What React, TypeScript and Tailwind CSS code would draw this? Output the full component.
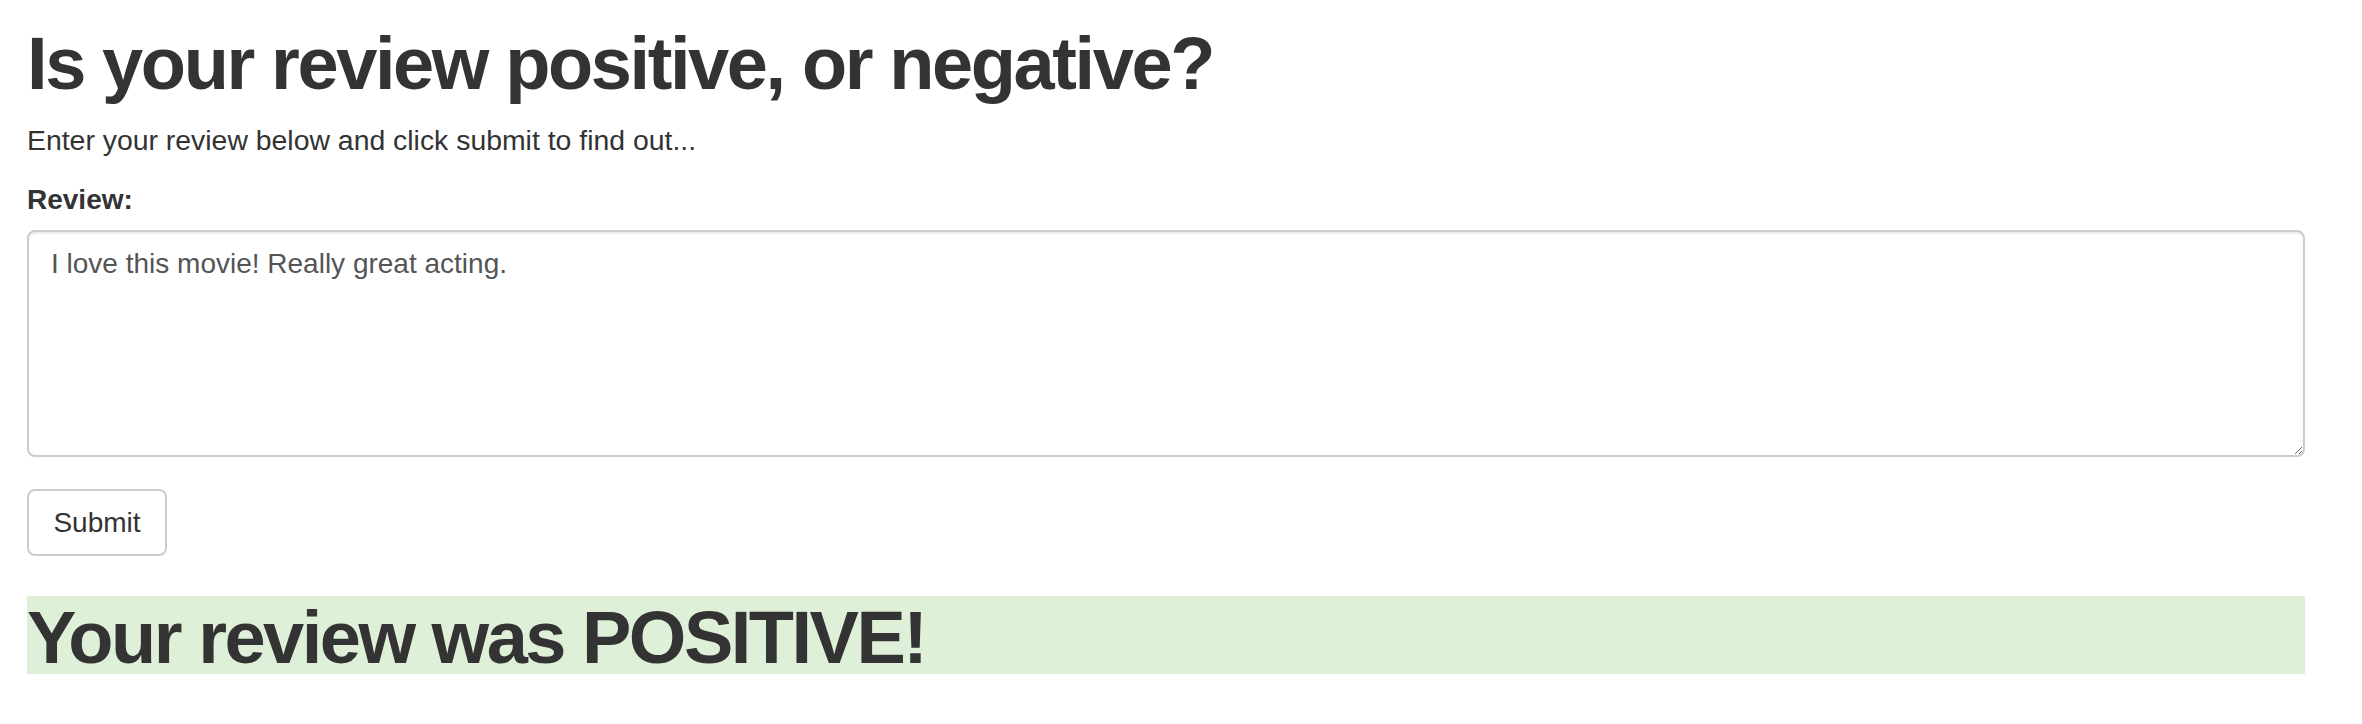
import { useState } from 'react'

export default function App() {
  const [review, setReview] = useState('I love this movie! Really great acting.')

  return (
    <div className="min-h-screen bg-white pl-[27px] pr-[57px] font-['Liberation_Sans',Arial,sans-serif] text-[#333]">
      <h1 className="mt-[24px] text-[74px] leading-[79px] font-bold tracking-[-2.4px] whitespace-nowrap">
        Is your review positive, or negative?
      </h1>
      <p className="mt-[17px] text-[28.4px] leading-[40px]">
        Enter your review below and click submit to find out...
      </p>
      <form onSubmit={(e) => e.preventDefault()}>
        <label htmlFor="review" className="mt-[20px] block text-[28px] leading-[40px] font-bold">
          Review:
        </label>
        <textarea
          id="review"
          value={review}
          onChange={(e) => setReview(e.target.value)}
          className="mt-[10px] block h-[227px] w-full rounded-[8px] border-2 border-[#ccc] bg-white px-[22px] pt-[12px] text-[28px] leading-[40px] text-[#555] shadow-[inset_0_2px_2px_rgba(0,0,0,0.075)] outline-none"
        />
        <button
          type="submit"
          className="mt-[32px] flex h-[67px] w-[140px] items-center justify-center rounded-[8px] border-2 border-[#ccc] bg-white text-[28px] leading-[40px] text-[#333]"
        >
          Submit
        </button>
      </form>
      <div className="mt-[40px] h-[78px] bg-[#dff0d8]">
        <h1 className="text-[74px] leading-[83px] font-bold tracking-[-2.5px] whitespace-nowrap">
          Your review was POSITIVE!
        </h1>
      </div>
    </div>
  )
}
